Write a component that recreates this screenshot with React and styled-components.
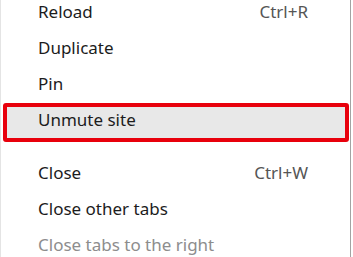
import React from 'react';
import styled, { createGlobalStyle } from 'styled-components';

const GlobalStyle = createGlobalStyle`
  html, body {
    margin: 0;
    padding: 0;
    background: #ffffff;
  }
`;

const Menu = styled.div`
  width: 349px;
  height: 257px;
  overflow: hidden;
  background: #ffffff;
  border-left: 1px solid #e4e4e4;
  border-right: 1px solid #a3a3a3;
  font-family: "Noto Sans", "Open Sans", sans-serif;
  font-size: 17px;
  color: #1c1c1c;
`;

const List = styled.div`
  display: flex;
  flex-direction: column;
  margin-top: -7px;
`;

const Item = styled.div`
  position: relative;
  height: 36px;
  display: flex;
  align-items: center;
  justify-content: space-between;
  padding: 0 42px 0 37px;
  color: ${props => (props.disabled ? '#8d8d8d' : '#1c1c1c')};

  ${props =>
    props.marked &&
    `
    &::before {
      content: '';
      position: absolute;
      top: 2px;
      bottom: -5px;
      left: 2px;
      right: 1px;
      background: #e8e8e8;
      border: 4px solid #e8000c;
      border-radius: 3px;
      z-index: 0;
    }
  `}
`;

const Label = styled.span`
  position: relative;
  z-index: 1;
`;

const Shortcut = styled.span`
  position: relative;
  z-index: 1;
  color: #555555;
`;

const Separator = styled.div`
  height: 17px;
`;

const items = [
  { label: 'Reload', shortcut: 'Ctrl+R' },
  { label: 'Duplicate' },
  { label: 'Pin' },
  { label: 'Unmute site', marked: true },
  { separator: true },
  { label: 'Close', shortcut: 'Ctrl+W' },
  { label: 'Close other tabs' },
  { label: 'Close tabs to the right', disabled: true },
];

const App = () => (
  <>
    <GlobalStyle />
    <Menu>
      <List>
        {items.map((item, i) =>
          item.separator ? (
            <Separator key={i} />
          ) : (
            <Item key={i} marked={item.marked} disabled={item.disabled}>
              <Label>{item.label}</Label>
              {item.shortcut && <Shortcut>{item.shortcut}</Shortcut>}
            </Item>
          )
        )}
      </List>
    </Menu>
  </>
);

export default App;
